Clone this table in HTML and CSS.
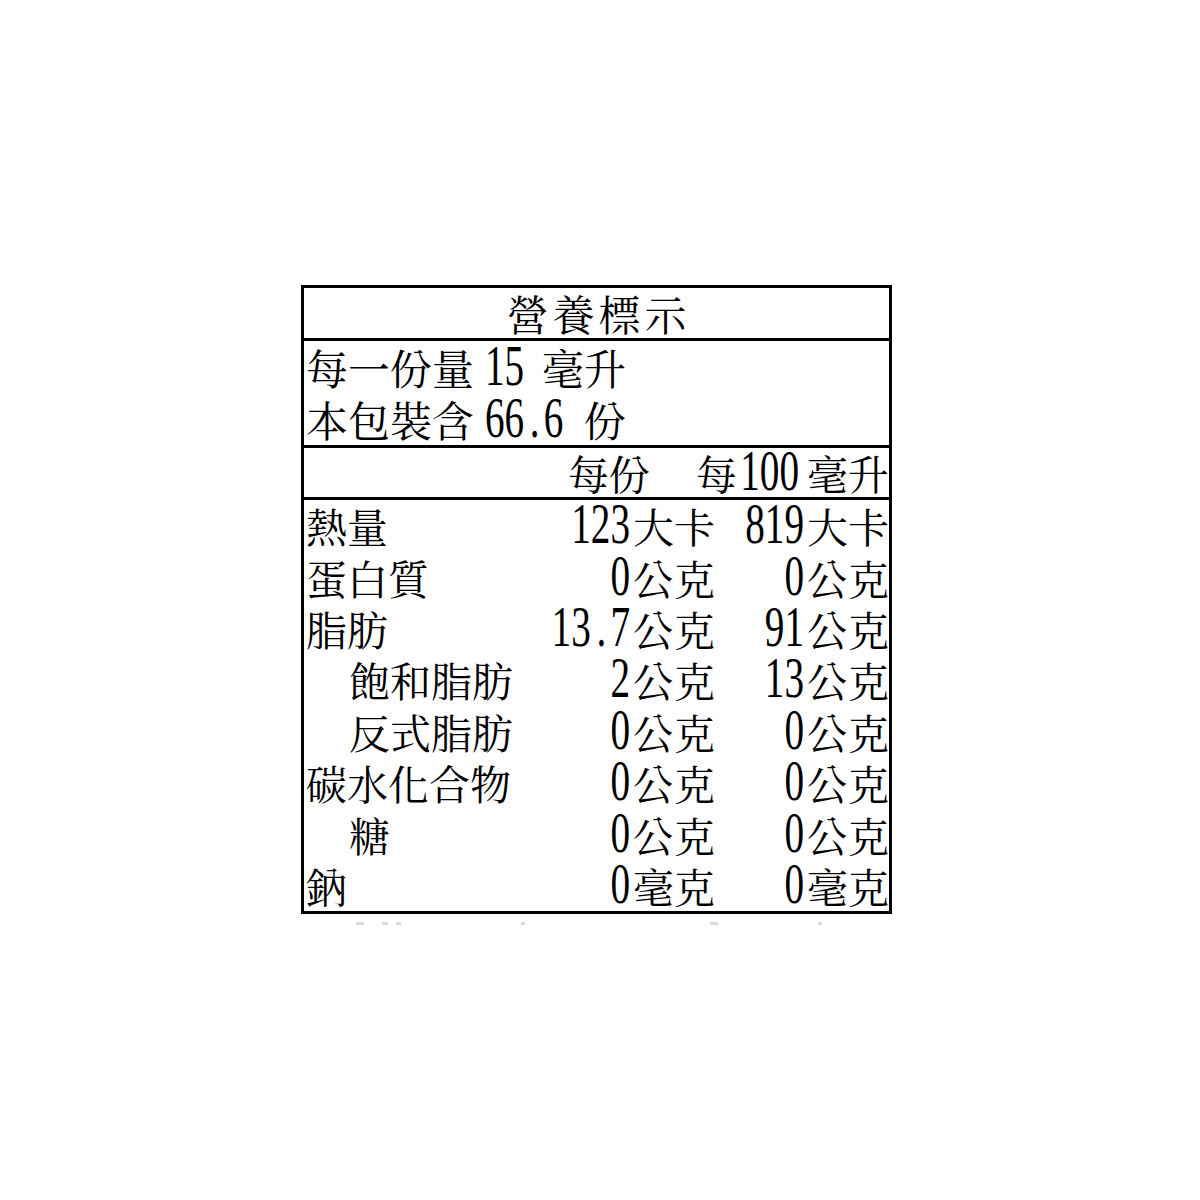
FILE: index.html
```html
<!DOCTYPE html>
<html lang="zh-Hant">
<head>
<meta charset="utf-8">
<title>營養標示</title>
<link rel="stylesheet" href="styles.css">
</head>
<body>
<div class="page">
  <div class="label">
    <div class="title">營養標示</div>
    <div class="serving">
      <div class="line"><span>每一份量</span><span class="snum s15">15</span><span>毫升</span></div>
      <div class="line"><span>本包裝含</span><span class="snum s66">66<span class="dot">.</span>6</span><span>份</span></div>
    </div>
    <div class="head">
      <div></div>
      <div class="c1 hc1"><span>每份</span></div>
      <div class="c2"><span>每</span><span class="num hnum">100</span><span class="hunit">毫升</span></div>
    </div>
    <div class="rows">
      <div class="row"><div class="name">熱量</div><div class="c1"><span class="num">123</span><span>大卡</span></div><div class="c2"><span class="num">819</span><span>大卡</span></div></div>
      <div class="row"><div class="name">蛋白質</div><div class="c1"><span class="num">0</span><span>公克</span></div><div class="c2"><span class="num">0</span><span>公克</span></div></div>
      <div class="row"><div class="name">脂肪</div><div class="c1"><span class="num">13<span class="dot">.</span>7</span><span>公克</span></div><div class="c2"><span class="num">91</span><span>公克</span></div></div>
      <div class="row"><div class="name sub">飽和脂肪</div><div class="c1"><span class="num">2</span><span>公克</span></div><div class="c2"><span class="num">13</span><span>公克</span></div></div>
      <div class="row"><div class="name sub">反式脂肪</div><div class="c1"><span class="num">0</span><span>公克</span></div><div class="c2"><span class="num">0</span><span>公克</span></div></div>
      <div class="row"><div class="name">碳水化合物</div><div class="c1"><span class="num">0</span><span>公克</span></div><div class="c2"><span class="num">0</span><span>公克</span></div></div>
      <div class="row"><div class="name sub">糖</div><div class="c1"><span class="num">0</span><span>公克</span></div><div class="c2"><span class="num">0</span><span>公克</span></div></div>
      <div class="row"><div class="name">鈉</div><div class="c1"><span class="num">0</span><span>毫克</span></div><div class="c2"><span class="num">0</span><span>毫克</span></div></div>
    </div>
  </div>
  <div class="residue">
    <span class="speck w8 m55"></span>
    <span class="speck w6 m18"></span>
    <span class="speck w5 m8"></span>
    <span class="speck w4 m120"></span>
    <span class="speck w8 m185"></span>
    <span class="speck w4 m100"></span>
  </div>
</div>
</body>
</html>
```

FILE: styles.css
```css
html, body {
  margin: 0;
  padding: 0;
  background: #ffffff;
}

.page {
  padding: 285px 0 0 301px;
}

.label {
  width: 585px;
  border: 3px solid #000;
  font-family: "Noto Serif CJK TC", "Noto Sans CJK TC", serif;
  font-size: 41px;
  color: #000;
  white-space: nowrap;
}

.title {
  height: 50px;
  line-height: 50px;
  text-align: center;
  font-size: 42px;
  letter-spacing: 4px;
  padding-left: 4px;
  border-bottom: 3px solid #000;
}

.serving {
  padding-left: 2px;
  border-bottom: 3px solid #000;
  font-size: 42px;
}

.line {
  height: 52px;
  display: flex;
  align-items: baseline;
  line-height: 52px;
}

.head,
.row {
  display: grid;
  grid-template-columns: 1fr 176px 174px;
  align-items: center;
}

.head {
  height: 49px;
  line-height: 49px;
  border-bottom: 3px solid #000;
}

.rows {
  display: flex;
  flex-direction: column;
}

.row {
  height: 51.4px;
  line-height: 51px;
}

.name {
  padding-left: 2px;
}

.name.sub {
  padding-left: 45px;
}

.c1,
.c2 {
  display: flex;
  justify-content: flex-end;
  align-items: baseline;
}

.hc1 {
  padding-right: 65px;
}

.num,
.snum {
  display: inline-block;
  font-family: "Liberation Serif", "Times New Roman", serif;
  font-size: 56px;
  line-height: 40px;
  transform: scaleX(0.7);
}

.dot {
  padding: 0 6px 0 8px;
}

.num {
  transform-origin: right center;
  margin-right: 3px;
}

.hnum {
  margin-left: -22px;
}

.hunit {
  margin-left: 5px;
}

.snum {
  transform-origin: left center;
  margin-left: 11px;
}

.s15 {
  margin-right: 1px;
}

.s66 {
  margin-right: -13px;
}

.residue {
  display: flex;
  height: 4px;
  margin-top: 8px;
}

.speck {
  display: block;
  height: 3px;
  background: #dadada;
}

.w4 { width: 4px; }
.w5 { width: 5px; }
.w6 { width: 6px; }
.w8 { width: 8px; }

.m8 { margin-left: 8px; }
.m18 { margin-left: 18px; }
.m55 { margin-left: 55px; }
.m100 { margin-left: 100px; }
.m120 { margin-left: 120px; }
.m185 { margin-left: 185px; }
```
